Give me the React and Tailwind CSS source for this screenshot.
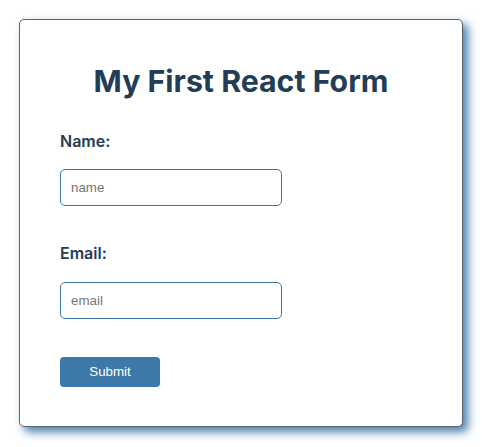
export default function App() {
  return (
    <div className="w-[482px] h-[447px] bg-white pt-[19px] pl-[19px]">
      <div className="w-[444px] h-[408px] border border-[#5b6570] rounded-[5px] bg-white shadow-[5px_5px_10px_rgba(62,120,168,0.95)] px-[40px] pt-[43px]" style={{ fontFamily: "Inter, sans-serif" }}>
        <h1 className="text-center text-[30.3px] leading-[36px] font-bold text-[#223d55]">My First React Form</h1>
        <form className="mt-[32px] flex flex-col">
          <label className="text-[16px] leading-[20px] font-semibold text-[#223d55]">Name:</label>
          <input
            placeholder="name"
            className="mt-[18px] w-[222px] h-[37px] border border-[#3e78a8] rounded-[5px] px-[10px] text-[13.33px] placeholder-[#757575] outline-none"
            style={{ fontFamily: '"Liberation Sans", Arial, sans-serif' }}
          />
          <label className="mt-[37px] text-[16px] leading-[20px] font-semibold text-[#223d55]">Email:</label>
          <input
            placeholder="email"
            className="mt-[19px] w-[222px] h-[37px] border border-[#3e78a8] rounded-[5px] px-[10px] text-[13.33px] placeholder-[#757575] outline-none"
            style={{ fontFamily: '"Liberation Sans", Arial, sans-serif' }}
          />
          <button
            type="button"
            className="mt-[38px] w-[100px] h-[30px] bg-[#3e78a8] rounded-[4px] text-white text-[13.33px]"
            style={{ fontFamily: '"Liberation Sans", Arial, sans-serif' }}
          >
            Submit
          </button>
        </form>
      </div>
    </div>
  );
}
